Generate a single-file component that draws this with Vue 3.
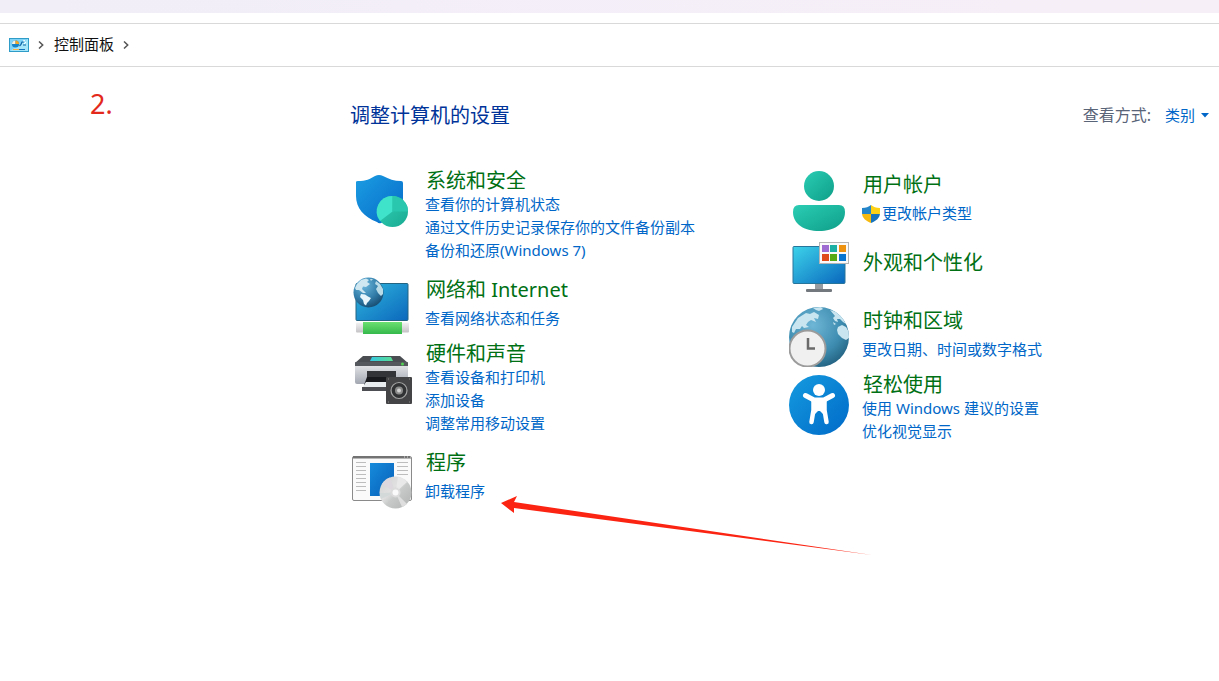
<template>
  <div class="window">
    <div class="title-strip"></div>

    <!-- Address bar -->
    <nav class="address-bar">
      <svg class="panel-icon" viewBox="0 0 20 14">
        <rect x="0.5" y="0.5" width="19" height="13" fill="#7fd3f7" stroke="#2f9cc8" />
        <path d="M1 13 L19 1 V13 Z" fill="#a6e6fb" />
        <circle cx="6.5" cy="6" r="3.6" fill="#1683c9" />
        <path d="M6.5 6 V2.4 A3.6 3.6 0 0 0 3 6 Z" fill="#f5f3e5" />
        <path d="M6.5 6 V2.4 A3.6 3.6 0 0 1 10 6 Z" fill="#f5a623" />
        <path d="M10.500 8 L12 6.500 L13 4 H15 M14 7 H17" stroke="#0f62a5" stroke-width="1.2" fill="none" />
        <path d="M14 3 L16 2.500 M15 6 L17 4" stroke="#fff" fill="none" />
        <path d="M4 11.500 H10" stroke="#f5b04a" />
        <path d="M10 11.500 H16" stroke="#1274bd" />
      </svg>
      <svg class="chevron" viewBox="0 0 6 8"><path d="M1 0.500 L4.700 4 L1 7.500" /></svg>
      <a href="#" class="crumb">控制面板</a>
      <svg class="chevron" viewBox="0 0 6 8"><path d="M1 0.500 L4.700 4 L1 7.500" /></svg>
    </nav>

    <main class="content">
      <div class="step">2.</div>

      <div class="heading-row">
        <h1>调整计算机的设置</h1>
        <div class="view-by">
          <label for="view-mode">查看方式:</label>
          <div class="view-select">
            <select id="view-mode" v-model="viewMode">
              <option value="category">类别</option>
              <option value="large">大图标</option>
              <option value="small">小图标</option>
            </select>
            <svg class="caret" viewBox="0 0 8 5"><path d="M0 0 H8 L4 4.500 Z" /></svg>
          </div>
        </div>
      </div>

      <div class="columns">
        <div v-for="(column, i) in columns" :key="i" class="column">
          <section
              v-for="item in column"
              :key="item.title"
              class="category"
              :class="{ multi: item.links.length > 1, bare: !item.links.length }"
          >
            <!-- System and security -->
            <svg v-if="item.icon === 'shield'" class="icon" viewBox="0 0 60 60">
              <defs>
                <linearGradient id="shield-fill" x1="0" y1="0" x2="1" y2="1">
                  <stop offset="0" stop-color="#1b9de2" />
                  <stop offset="1" stop-color="#0669c8" />
                </linearGradient>
                <linearGradient id="pie-fill" x1="0" y1="0" x2="1" y2="1">
                  <stop offset="0" stop-color="#35d2b8" />
                  <stop offset="1" stop-color="#17aa91" />
                </linearGradient>
              </defs>
              <path d="M4 11 Q4 10 6 10 C14 10 18 8 23 5 Q27 3 31 5 C37 8 42 10 49 10 Q51 10 51 12 V27 C51 40 40 48 29 52 Q27 53 25 51 C12 46 4 37 4 25 Z" fill="url(#shield-fill)" />
              <circle cx="40.500" cy="40.500" r="15.500" fill="url(#pie-fill)" />
              <path d="M40.500 40.500 V25 A15.500 15.500 0 0 0 28 50 Z" fill="#3fe3ca" />
              <path d="M40.500 40.500 V25 A15.500 15.500 0 0 1 56 40.500 Z" fill="#29c8ae" />
            </svg>

            <!-- Network -->
            <svg v-else-if="item.icon === 'network'" class="icon" viewBox="0 0 60 60">
              <defs>
                <linearGradient id="net-screen" x1="0" y1="0" x2="1" y2="1">
                  <stop offset="0" stop-color="#30b8de" />
                  <stop offset="1" stop-color="#0b67bc" />
                </linearGradient>
                <linearGradient id="net-plug" x1="0" y1="0" x2="0" y2="1">
                  <stop offset="0" stop-color="#f4f3f4" />
                  <stop offset="1" stop-color="#c4c2c5" />
                </linearGradient>
                <linearGradient id="net-cable" x1="0" y1="0" x2="0" y2="1">
                  <stop offset="0" stop-color="#6be070" />
                  <stop offset="1" stop-color="#35b94b" />
                </linearGradient>
                <radialGradient id="net-globe" cx="0.35" cy="0.25" r="0.8">
                  <stop offset="0" stop-color="#6db8de" />
                  <stop offset="0.6" stop-color="#327da9" />
                  <stop offset="1" stop-color="#174b70" />
                </radialGradient>
              </defs>
              <rect x="4" y="7.500" width="52" height="37" rx="1" fill="url(#net-screen)" stroke="#246483" />
              <rect x="4" y="46.500" width="53" height="10" rx="1" fill="url(#net-plug)" />
              <path d="M11 46 H50 V58 H11 Z" fill="url(#net-cable)" />
              <circle cx="16.500" cy="16.500" r="15" fill="url(#net-globe)" />
              <path d="M3 12 L5 8 L9 4 L14 2.500 L17 4 L15 6 L18 8 L14 11 L11 10.500 L10 13 L12 15 L14 17 L11 17 L7 14 L4 14 Z" fill="#cfe7f1" />
              <path d="M9 18 L13 18.500 L16 20.500 L19 22 L17 25 L15 27 L14 29.500 L12 28 L11 24 L8 21 Z" fill="#e9f6fb" />
              <path d="M18 3 L21 3 L19 5 Z M24 5 L28 8 L31 13 V18 L29 20 L26 17 L24 13 L26 10 L23 8 Z" fill="#b9dbe8" />
            </svg>

            <!-- Hardware and sound -->
            <svg v-else-if="item.icon === 'printer'" class="icon" viewBox="0 -5 60 60">
              <defs>
                <linearGradient id="printer-body" x1="0" y1="0" x2="0" y2="1">
                  <stop offset="0" stop-color="#dfe1e4" />
                  <stop offset="1" stop-color="#a3a7b1" />
                </linearGradient>
                <linearGradient id="printer-glass" x1="0" y1="0" x2="1" y2="0">
                  <stop offset="0" stop-color="#35c7e1" />
                  <stop offset="1" stop-color="#59dc92" />
                </linearGradient>
              </defs>
              <path d="M11 7 H48 L56 14 H3 Z" fill="#4a4e52" />
              <path d="M20 8 H39 L41 12 H18 Z" fill="url(#printer-glass)" />
              <rect x="3" y="13" width="53" height="5" rx="1" fill="#55595d" />
              <circle cx="50.500" cy="15" r="1.500" fill="#52d353" />
              <path d="M3 17 H56 V33 Q56 35 54 35 H5 Q3 35 3 33 Z" fill="url(#printer-body)" />
              <path d="M15 22 H44 V35 H15 Z" fill="#323437" />
              <path d="M15 28 H43 V36 H12 Z" fill="#17191d" />
              <path d="M14 33 H43 V39 H10 Z" fill="#e9ecee" />
              <path d="M10 38 H42 V42 H10 Z" fill="#4c4e53" />
              <rect x="34" y="28" width="26" height="27" rx="1" fill="#444446" />
              <circle cx="47" cy="41.500" r="8" fill="#303233" stroke="#a5a5a5" stroke-width="1.200" />
              <circle cx="47" cy="41.500" r="4" fill="#8b8b8b" />
              <circle cx="47" cy="41.500" r="2" fill="#d2d2d2" />
              <path d="M36 30 h1 M57 30 h1 M36 53 h1 M57 53 h1" stroke="#888" />
            </svg>

            <!-- Programs -->
            <svg v-else-if="item.icon === 'programs'" class="icon" viewBox="0 -3 60 60">
              <defs>
                <linearGradient id="app-fill" x1="0" y1="0" x2="1" y2="1">
                  <stop offset="0" stop-color="#168bdc" />
                  <stop offset="1" stop-color="#0760b8" />
                </linearGradient>
                <linearGradient id="disc-fill" x1="0" y1="0" x2="1" y2="1">
                  <stop offset="0" stop-color="#cfd1d1" />
                  <stop offset="0.4" stop-color="#e2e1e1" />
                  <stop offset="0.55" stop-color="#c8caca" />
                  <stop offset="1" stop-color="#b0b2b2" />
                </linearGradient>
              </defs>
              <rect x="0.500" y="4.500" width="59" height="44" rx="1.500" fill="#fafafa" stroke="#8a8a8a" />
              <path d="M1 4 H59 V6.500 H1 Z" fill="#737373" />
              <path d="M52 5 H53 M55 5 H56 M58 5 H59" stroke="#ddd" />
              <path d="M4 10.500 H14 M4 14.500 H14 M4 18.500 H14 M4 22.500 H14 M4 26.500 H14 M4 30.500 H14 M4 34.500 H14 M4 38.500 H14 M45 10.500 H56 M45 14.500 H56 M45 18.500 H56 M45 22.500 H56" stroke="#bdbdbd" />
              <rect x="18" y="11" width="24" height="33" fill="url(#app-fill)" />
              <circle cx="43.500" cy="40.500" r="16" fill="url(#disc-fill)" />
              <path d="M43.500 40.500 L30 32 A16 16 0 0 1 38 25.500 Z" fill="#dcd8dd" />
              <path d="M43.500 40.500 L46 25 A16 16 0 0 1 55 30 Z" fill="#e9e9e9" />
              <path d="M43.500 40.500 L50 55 A16 16 0 0 0 55 52 Z" fill="#dedede" />
              <path d="M43.500 40.500 L28 41 A16 16 0 0 0 29 47 Z" fill="#d3d9d9" />
              <circle cx="43.500" cy="40.500" r="5" fill="#dcdcdc" />
              <circle cx="43.500" cy="40.500" r="3" fill="#fafafa" />
            </svg>

            <!-- User accounts -->
            <svg v-else-if="item.icon === 'user'" class="icon" viewBox="0 0 60 60">
              <defs>
                <linearGradient id="user-fill" x1="0" y1="0" x2="1" y2="1">
                  <stop offset="0" stop-color="#2bcdb4" />
                  <stop offset="1" stop-color="#0e9e88" />
                </linearGradient>
              </defs>
              <circle cx="30" cy="15" r="15" fill="url(#user-fill)" />
              <path d="M10 34 H50 Q56 34 56 41 C56 53 45 60 30 60 S4 53 4 41 Q4 34 10 34 Z" fill="url(#user-fill)" />
            </svg>

            <!-- Appearance -->
            <svg v-else-if="item.icon === 'display'" class="icon" viewBox="0 0 60 60">
              <defs>
                <linearGradient id="display-fill" x1="0" y1="0" x2="1" y2="1">
                  <stop offset="0" stop-color="#3dd3ea" />
                  <stop offset="1" stop-color="#0967bd" />
                </linearGradient>
              </defs>
              <path d="M26 45 H34 V51 H26 Z" fill="#979ca3" />
              <rect x="17" y="50" width="26" height="3" rx="1" fill="#73787f" />
              <rect x="4" y="7.500" width="52" height="37" rx="1" fill="url(#display-fill)" stroke="#28759b" />
              <rect x="30.500" y="3.500" width="29" height="21" fill="#fafafa" stroke="#b5b5b5" />
              <path d="M33 6 h7 v7 h-7 Z" fill="#9d6bd1" />
              <path d="M41 6 h7 v7 h-7 Z" fill="#1baea2" />
              <path d="M50 6 h7 v7 h-7 Z" fill="#ed9210" />
              <path d="M33 15 h7 v7 h-7 Z" fill="#e04b1b" />
              <path d="M41 15 h7 v7 h-7 Z" fill="#55aa13" />
              <path d="M50 15 h7 v7 h-7 Z" fill="#0876d0" />
            </svg>

            <!-- Clock and region -->
            <svg v-else-if="item.icon === 'clock'" class="icon" viewBox="0 0 60 60">
              <defs>
                <radialGradient id="clock-globe" cx="0.4" cy="0.3" r="0.8">
                  <stop offset="0" stop-color="#6fb6d6" />
                  <stop offset="0.6" stop-color="#3d8cb0" />
                  <stop offset="1" stop-color="#1d5876" />
                </radialGradient>
                <clipPath id="globe-clip"><circle cx="30" cy="30" r="30" /></clipPath>
              </defs>
              <circle cx="30" cy="30" r="30" fill="url(#clock-globe)" />
              <g clip-path="url(#globe-clip)" fill="#c9e5ef">
                <path d="M3 20 L9 11 L17 6 L21 7 L25 5 L30 8 L29 12 L25 11 L27 15 L22 13 L19 15 L17 18 L20 20 L15 21 L13 19 L11 22 L7 22 L5 26 L3 25 Z" />
                <path d="M24 1 L32 0 L34 2 L30 4 L27 3 Z M41 3 L47 5 L53 10 L57 17 L54 15 L51 12 L48 12 L49 15 L46 14 L44 11 L46 9 Z M44 15 L47 17 L45 18 Z" />
                <path d="M49 20 L53 18 L57 20 L60 25 V31 L57 33 L53 31 L49 27 L48 23 Z" />
              </g>
              <circle cx="18.500" cy="41.500" r="18" fill="#f0f0f0" stroke="#9b9b9b" stroke-width="2" />
              <path d="M19 31 V41.500 H26" fill="none" stroke="#6a6a6a" stroke-width="2.500" />
            </svg>

            <!-- Ease of access -->
            <svg v-else class="icon" viewBox="0 0 60 60">
              <defs>
                <linearGradient id="access-fill" x1="0" y1="0" x2="1" y2="1">
                  <stop offset="0" stop-color="#159bdf" />
                  <stop offset="1" stop-color="#006ac8" />
                </linearGradient>
              </defs>
              <circle cx="30" cy="30" r="30" fill="url(#access-fill)" />
              <circle cx="30" cy="15" r="6" fill="#fff" />
              <path d="M16.500 20.500 L25 25 H35 L43.500 20.500" fill="none" stroke="#fff" stroke-width="5" stroke-linecap="round" stroke-linejoin="round" />
              <path d="M24.500 25 V35 L22.500 47 M35.500 25 V35 L37.500 47" fill="none" stroke="#fff" stroke-width="4.500" stroke-linecap="round" stroke-linejoin="round" />
              <path d="M23 23 H37 V36 L35 40 L31 36 H29 L25 40 L23 36 Z" fill="#fff" />
            </svg>

            <div class="category-text">
              <h2><a href="#">{{ item.title }}</a></h2>
              <ul v-if="item.links.length">
                <li v-for="link in item.links" :key="link">
                  <svg v-if="item.admin" class="uac" viewBox="0 0 18 18">
                    <defs>
                      <clipPath id="uac-clip">
                        <path d="M9 0 C6.500 2 4 3 0 3 V8 C0 13 4 16 9 18 C14 16 18 13 18 8 V3 C14 3 11.500 2 9 0 Z" />
                      </clipPath>
                    </defs>
                    <g clip-path="url(#uac-clip)">
                      <rect width="9" height="9" fill="#2585c9" />
                      <rect x="9" width="9" height="9" fill="#fcd116" />
                      <rect y="9" width="9" height="9" fill="#f5b90f" />
                      <rect x="9" y="9" width="9" height="9" fill="#1874bd" />
                    </g>
                  </svg>
                  <a href="#">{{ link }}</a>
                </li>
              </ul>
            </div>
          </section>
        </div>
      </div>

      <!-- Pointer to the uninstall link -->
      <svg class="arrow" viewBox="0 0 372 60">
        <path d="M0 7 L16 0 L13 6 L371 59 L13 12 L13 17 Z" />
      </svg>
    </main>
  </div>
</template>

<script setup>
import { ref } from 'vue';

const viewMode = ref('category');

const columns = [
  [
    {
      icon: 'shield',
      title: '系统和安全',
      links: ['查看你的计算机状态', '通过文件历史记录保存你的文件备份副本', '备份和还原(Windows 7)'],
    },
    { icon: 'network', title: '网络和 Internet', links: ['查看网络状态和任务'] },
    {
      icon: 'printer',
      title: '硬件和声音',
      links: ['查看设备和打印机', '添加设备', '调整常用移动设置'],
    },
    { icon: 'programs', title: '程序', links: ['卸载程序'] },
  ],
  [
    { icon: 'user', title: '用户帐户', links: ['更改帐户类型'], admin: true },
    { icon: 'display', title: '外观和个性化', links: [] },
    { icon: 'clock', title: '时钟和区域', links: ['更改日期、时间或数字格式'] },
    { icon: 'access', title: '轻松使用', links: ['使用 Windows 建议的设置', '优化视觉显示'] },
  ],
];
</script>

<style>
body {
  margin: 0;
  background: #fff;
}
</style>

<style scoped>
.window {
  min-height: 100vh;
  font-family: "Noto Sans", "Noto Sans CJK SC", sans-serif;
  font-size: 15px;
  line-height: 23px;
}

a {
  color: #0067c8;
  text-decoration: none;
}

a:hover {
  text-decoration: underline;
}

svg {
  display: block;
  flex: none;
}

.title-strip {
  height: 13px;
  margin-bottom: 10px;
  background: linear-gradient(90deg, #f1eef8, #f7eff8);
}

.address-bar {
  display: flex;
  align-items: center;
  height: 42px;
  padding-left: 9px;
  border-top: 1px solid #d9d9d9;
  border-bottom: 1px solid #d9d9d9;
}

.panel-icon {
  width: 20px;
  height: 14px;
}

.chevron {
  width: 6px;
  height: 8px;
  margin: 0 10px 0 9px;
  fill: none;
  stroke: #555;
  stroke-width: 1.5;
}

.crumb {
  padding-bottom: 2px;
  color: #111;
}

.content {
  position: relative;
  padding: 34px 10px 40px 350px;
}

.step {
  position: absolute;
  top: 20px;
  left: 90px;
  color: #e3291b;
  font-size: 27px;
  line-height: 34px;
}

.heading-row {
  display: flex;
  align-items: center;
  justify-content: space-between;
  margin-bottom: 38px;
}

h1 {
  margin: 0;
  padding-top: 2px;
  color: #003399;
  font-size: 20px;
  font-weight: 400;
  line-height: 26px;
}

.view-by {
  display: flex;
  align-items: center;
  gap: 14px;
}

.view-by label {
  color: #5a6478;
  font-size: 16px;
}

.view-select {
  position: relative;
}

.view-select select {
  display: block;
  width: 44px;
  padding: 0;
  border: 0;
  appearance: none;
  background: transparent;
  color: #0067c8;
  font: inherit;
}

.caret {
  position: absolute;
  top: 9px;
  right: 0;
  width: 8px;
  height: 5px;
  fill: #0067c8;
  pointer-events: none;
}

.columns {
  display: grid;
  grid-template-columns: 51% 49%;
  padding-left: 2px;
}

.column {
  display: flex;
  flex-direction: column;
  gap: 4px;
}

.column + .column {
  padding-top: 4px;
}

.category {
  display: flex;
  gap: 13px;
}

.category.multi {
  padding-bottom: 10px;
}

.category.multi .icon {
  margin-top: 4px;
}

.category.bare {
  padding: 4px 0;
}

.category.bare .category-text {
  padding-top: 10px;
}

.icon {
  width: 60px;
  height: 60px;
}

h2 {
  margin: 0 0 5px;
  padding: 2px 0 0 1px;
  font-size: 20px;
  font-weight: 400;
  line-height: 24px;
}

.multi h2 {
  margin-bottom: 0;
}

h2 a {
  color: #007014;
}

ul {
  margin: 0;
  padding: 0;
  list-style: none;
}

li {
  display: flex;
  align-items: center;
  gap: 2px;
}

.uac {
  width: 18px;
  height: 18px;
}

.arrow {
  position: absolute;
  top: 429px;
  left: 501px;
  width: 372px;
  height: 60px;
  fill: #fb2413;
  pointer-events: none;
}
</style>
